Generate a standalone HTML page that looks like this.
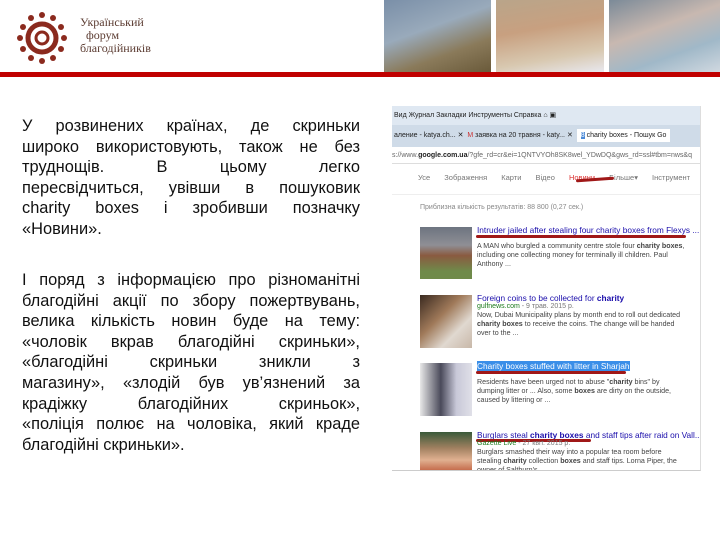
<!DOCTYPE html>
<html><head><meta charset="utf-8"><style>
body{margin:0;width:720px;height:540px;background:#fff;position:relative;overflow:hidden;font-family:"Liberation Sans",sans-serif}
.a{position:absolute}
.t{position:absolute;left:22px;width:338px;font-size:16.4px;letter-spacing:0;line-height:20.6px;color:#111}
.t div{text-align:justify;text-align-last:justify;white-space:nowrap}
.t div.l{text-align-last:left}
.g{font-size:7px;color:#555;white-space:nowrap}
.ttl{font-size:8.3px;color:#1a0dab;white-space:nowrap}
.s{font-size:7.1px;color:#444;line-height:8.8px;white-space:nowrap}
.ul{height:3px;background:#a01818;border-radius:2px}
</style></head><body>
<svg class="a" style="left:14px;top:10px" width="56" height="56" viewBox="0 0 56 56">
<g fill="#8b2a1e">
<circle cx="28" cy="5" r="3"/><circle cx="39" cy="8" r="3"/><circle cx="47" cy="17" r="3"/><circle cx="50" cy="28" r="3"/><circle cx="47" cy="39" r="3"/><circle cx="39" cy="48" r="3"/><circle cx="28" cy="51" r="3"/><circle cx="17" cy="48" r="3"/><circle cx="9" cy="39" r="3"/><circle cx="6" cy="28" r="3"/><circle cx="9" cy="17" r="3"/><circle cx="17" cy="8" r="3"/></g>
<circle cx="28" cy="28" r="14" fill="none" stroke="#8b2a1e" stroke-width="5"/>
<circle cx="28" cy="28" r="6" fill="none" stroke="#8b2a1e" stroke-width="3"/>
</svg>
<div class="a" style="left:80px;top:16px;font-family:'Liberation Serif',serif;font-size:12px;line-height:13px;color:#5a3a30">Український<br>&nbsp;&nbsp;форум<br>благодійників</div>
<div class="a" style="left:384px;top:0;width:107px;height:72px;background:linear-gradient(160deg,#7a8fa8,#9ab 40%,#8a7a5a 70%,#6a5a3a)"></div>
<div class="a" style="left:496px;top:0;width:108px;height:72px;background:linear-gradient(170deg,#b9a58a,#c8a080 40%,#d8c8b0 75%,#e8e8ef)"></div>
<div class="a" style="left:609px;top:0;width:111px;height:72px;background:linear-gradient(160deg,#7b8a98,#c8b8b0 40%,#a0b8c8 70%,#d0d8e0)"></div>
<div class="a" style="left:0;top:72px;width:720px;height:5px;background:#c00000"></div>
<div class="t" style="top:116px">
<div>У розвинених країнах, де скриньки</div>
<div>широко використовують, також не без</div>
<div>труднощів. В цьому легко</div>
<div>пересвідчиться, увівши в пошуковик</div>
<div>charity boxes і зробивши позначку</div>
<div class="l">«Новини».</div>
</div>
<div class="t" style="top:270px">
<div>І поряд з інформацією про різноманітні</div>
<div>благодійні акції по збору пожертвувань,</div>
<div>велика кількість новин буде на тему:</div>
<div>«чоловік вкрав благодійні скриньки»,</div>
<div>«благодійні скриньки зникли з</div>
<div>магазину», «злодій був ув’язнений за</div>
<div>крадіжку благодійних скриньок»,</div>
<div>«поліція полює на чоловіка, який краде</div>
<div class="l">благодійні скриньки».</div>
</div>
<div class="a" style="left:392px;top:106px;width:308px;height:364px;background:#fff;overflow:hidden;border-right:1px solid #ddd;border-bottom:1px solid #ccc">
 <div class="a g" style="left:0;top:0;width:308px;height:19px;background:#dfe8f2;padding:5px 0 0 2px;box-sizing:border-box;color:#222">Вид Журнал Закладки Инструменты Справка ⌂ ▣</div>
 <div class="a g" style="left:0;top:19px;width:308px;height:22px;background:#cfdbe8;padding:6px 0 0 2px;box-sizing:border-box;color:#222">аление - katya.ch... ✕ &nbsp;<span style="color:#c33">M</span> заявка на 20 травня - katy... ✕ &nbsp;<span style="background:#fff;padding:3px 4px"><span style="background:#4a8ad8;color:#fff">8</span> charity boxes - Пошук Go</span></div>
 <div class="a g" style="left:0;top:41px;width:308px;height:17px;background:#fff;border-bottom:1px solid #ddd;padding:5px 0 0 0;box-sizing:border-box;color:#666">s://www.<b style="color:#222">google.com.ua</b>/?gfe_rd=cr&amp;ei=1QNTVYOh8SK8wel_YDwDQ&amp;gws_rd=ssl#tbm=nws&amp;q</div>
 <div class="a g" style="left:0;top:59px;width:308px;height:30px;border-bottom:1px solid #eee;padding:8px 0 0 26px;box-sizing:border-box;color:#777;word-spacing:12px;font-size:7.5px">Усе Зображення Карти Відео <span style="color:#d33">Новини</span> Більше▾ Інструмент</div>
 <div class="a ul" style="left:184px;top:72px;width:38px;transform:rotate(-4deg)"></div>
 <div class="a g" style="left:28px;top:98px;color:#888">Приблизна кількість результатів: 88 800 (0,27 сек.)</div>
 <div class="a" style="left:28px;top:121px;width:52px;height:52px;background:linear-gradient(180deg,#6d7480 0,#8f8f95 35%,#8a5a40 55%,#6f8a4a 85%)"></div>
 <div class="a ttl" style="left:85px;top:119px">Intruder jailed after stealing four charity boxes from Flexys ...</div>
 <div class="a ul" style="left:84px;top:129px;width:210px"></div>
 <div class="a s" style="left:85px;top:136px">A MAN who burgled a community centre stole four <b>charity boxes</b>,<br>including one collecting money for terminally ill children. Paul<br>Anthony ...</div>
 <div class="a" style="left:28px;top:189px;width:52px;height:53px;background:linear-gradient(135deg,#3a2a20,#a07a5a 40%,#e0d8d0 70%,#c8b8a8)"></div>
 <div class="a ttl" style="left:85px;top:187px">Foreign coins to be collected for <b>charity</b></div>
 <div class="a g" style="left:85px;top:197px;color:#1a7a1a">gulfnews.com <span style="color:#777">- 9 трав. 2015 р.</span></div>
 <div class="a s" style="left:85px;top:205px">Now, Dubai Municipality plans by month end to roll out dedicated<br><b>charity boxes</b> to receive the coins. The change will be handed<br>over to the ...</div>
 <div class="a" style="left:28px;top:257px;width:52px;height:53px;background:linear-gradient(90deg,#e8e8e8,#4a4a5a 40%,#c8c8d8 70%,#e0e0e8)"></div>
 <div class="a ttl" style="left:85px;top:255px;background:#3a8ee8;color:#fff">Charity boxes stuffed with litter in Sharjah</div>
 <div class="a ul" style="left:84px;top:265px;width:150px"></div>
 <div class="a s" style="left:85px;top:272px">Residents have been urged not to abuse "<b>charity</b> bins" by<br>dumping litter or ... Also, some <b>boxes</b> are dirty on the outside,<br>caused by littering or ...</div>
 <div class="a" style="left:28px;top:326px;width:52px;height:40px;background:linear-gradient(180deg,#3a5a3a,#a08060 40%,#e0b090 70%,#c06040)"></div>
 <div class="a ttl" style="left:85px;top:324px">Burglars steal <b>charity boxes</b> and staff tips after raid on Vall...</div>
 <div class="a ul" style="left:84px;top:333px;width:115px"></div>
 <div class="a g" style="left:85px;top:334px;color:#1a7a1a">Gazette Live <span style="color:#777">- 27 квіт. 2015 р.</span></div>
 <div class="a s" style="left:85px;top:342px">Burglars smashed their way into a popular tea room before<br>stealing <b>charity</b> collection <b>boxes</b> and staff tips. Lorna Piper, the<br>owner of Saltburn's ...</div>
</div>
</body></html>
